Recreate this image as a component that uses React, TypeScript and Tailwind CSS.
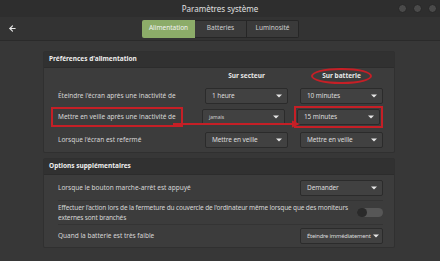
import { ArrowLeft } from "lucide-react";
import type { ReactNode } from "react";

const font = { fontFamily: '"Noto Sans", "DejaVu Sans", sans-serif' };

const Caret = () => (
  <svg width="6" height="4" viewBox="0 0 6 4" className="shrink-0">
    <path d="M0 0.5 L6 0.5 L3 3.5 Z" fill="#e6e6e6" />
  </svg>
);

const Select = ({
  value,
  textClass = "text-[6.5px] tracking-[-0.1px] text-[#dcdcdc]",
}: {
  value: string;
  textClass?: string;
}) => (
  <div className="flex h-[16px] w-[83px] shrink-0 items-center justify-between gap-[2px] rounded-[2px] border border-[#2b2b2b] bg-[#414141] pl-[6px] pr-[5px]">
    <span className={`whitespace-nowrap leading-[10px] ${textClass}`}>{value}</span>
    <Caret />
  </div>
);

const Row = ({
  label,
  children,
  line,
  className = "",
}: {
  label: ReactNode;
  children: ReactNode;
  line?: boolean;
  className?: string;
}) => (
  <div
    className={`flex items-center ${
      line ? "border-b border-[#343434]" : ""
    } ${className}`}
  >
    <div className="flex-1 text-[6.5px] leading-[10px] text-[#d6d6d6]">{label}</div>
    {children}
  </div>
);

export default function App() {
  return (
    <div
      className="relative h-[261px] w-[440px] overflow-hidden bg-[#373737] leading-none"
      style={font}
    >
      {/* title bar */}
      <div className="relative flex h-[17px] items-center justify-center bg-[#2e2e2e]">
        <span className="text-[8px] leading-[12px] text-[#e0e0e0]">Paramètres système</span>
        <div className="absolute right-[3px] top-[4px] flex gap-[6px]">
          <span className="h-[9px] w-[9px] rounded-full border border-[#262626] bg-[#4a4a4a]" />
          <span className="h-[9px] w-[9px] rounded-full border border-[#262626] bg-[#4a4a4a]" />
          <span className="h-[9px] w-[9px] rounded-full border border-[#262626] bg-[#4a4a4a]" />
        </div>
      </div>

      {/* toolbar */}
      <div className="flex h-[24px] items-center border-b border-[#2a2a2a] bg-[#333333] pl-[8px]">
        <ArrowLeft size={9} strokeWidth={3} color="#e8e8e8" />
        <div className="ml-[125px] flex h-[18px]">
          <div className="flex w-[53px] items-center justify-center rounded-l-[2px] bg-[#8cac69] text-[6.5px] text-[#f2f2f2]">
            Alimentation
          </div>
          <div className="flex w-[52px] items-center justify-center border border-l-0 border-[#262626] bg-[#3a3a3a] text-[6.5px] text-[#cfcfcf]">
            Batteries
          </div>
          <div className="flex w-[52px] items-center justify-center rounded-r-[2px] border border-l-0 border-[#262626] bg-[#3a3a3a] text-[6.5px] text-[#cfcfcf]">
            Luminosité
          </div>
        </div>
      </div>

      {/* content */}
      <div className="ml-[43px] mr-[45px] mt-[10px] flex flex-col gap-[5px]">
        <section className="relative rounded-[2px] border border-[#303030] bg-[#3c3c3c]">
          <div className="flex h-[16px] items-center border-b border-[#2c2c2c] bg-[#313131] pl-[5px] text-[6.5px] font-bold text-[#eeeeee]">
            Préférences d'alimentation
          </div>
          <div className="pl-[14px] pr-[11px]">
            <div className="flex h-[16px] items-center">
              <div className="flex-1" />
              <div className="w-[83px] text-center text-[6.5px] font-bold text-[#e6e6e6]">
                Sur secteur
              </div>
              <div className="ml-[12px] flex w-[83px] justify-center">
                <span className="rounded-[50%] border-2 border-[#c51f26] px-[9px] py-[3px] text-[6.5px] font-bold text-[#e6e6e6]">
                  Sur batterie
                </span>
              </div>
            </div>
            <Row label="Éteindre l'écran après une inactivité de" className="h-[22px] pt-[2px]">
              <Select value="1 heure" />
              <div className="ml-[12px]">
                <Select value="10 minutes" />
              </div>
            </Row>
            <Row
              className="h-[22px]"
              label={
                <span className="-ml-[7px] inline-block border-2 border-[#c51f26] px-[5px] py-[3px]">
                  Mettre en veille après une inactivité de
                </span>
              }
            >
              <Select value="jamais" textClass="text-[5px] text-[#cfcfcf]" />
              <div className="ml-[9px] border-2 border-[#c51f26] p-[1px]">
                <Select value="15 minutes" />
              </div>
            </Row>
            <Row label="Lorsque l'écran est refermé" className="h-[24px]">
              <Select value="Mettre en veille" />
              <div className="ml-[12px]">
                <Select value="Mettre en veille" />
              </div>
            </Row>
          </div>
          {/* red annotation arrow */}
          <svg
            className="pointer-events-none absolute left-[129px] top-[68px]"
            width="127"
            height="8"
            viewBox="0 0 127 8"
          >
            <line x1="0" y1="4" x2="120" y2="4" stroke="#c51f26" strokeWidth="2" />
            <path d="M119 0.5 L127 4 L119 7.5 Z" fill="#c51f26" />
          </svg>
        </section>

        <section className="rounded-[2px] border border-[#303030] bg-[#3c3c3c]">
          <div className="flex h-[16px] items-center border-b border-[#2c2c2c] bg-[#313131] pl-[5px] text-[6.5px] font-bold text-[#eeeeee]">
            Options supplémentaires
          </div>
          <div className="pl-[14px] pr-[11px]">
            <Row label="Lorsque le bouton marche-arrêt est appuyé" className="h-[26px]" line>
              <Select value="Demander" />
            </Row>
            <Row
              className="h-[24px]"
              line
              label={
                <span className="block whitespace-nowrap tracking-[-0.15px]">
                  Effectuer l'action lors de la fermeture du couvercle de l'ordinateur même lorsque que des moniteurs
                  <br />
                  externes sont branchés
                </span>
              }
            >
              <div className="flex h-[9px] w-[26px] shrink-0 items-center rounded-full bg-[#575757]">
                <span className="h-[9px] w-[10px] rounded-full bg-[#2a2a2a]" />
              </div>
            </Row>
            <Row label="Quand la batterie est très faible" className="h-[22px]">
              <Select
                value="Éteindre immédiatement"
                textClass="text-[5.8px] tracking-[-0.2px] text-[#dcdcdc]"
              />
            </Row>
          </div>
        </section>
      </div>
    </div>
  );
}
